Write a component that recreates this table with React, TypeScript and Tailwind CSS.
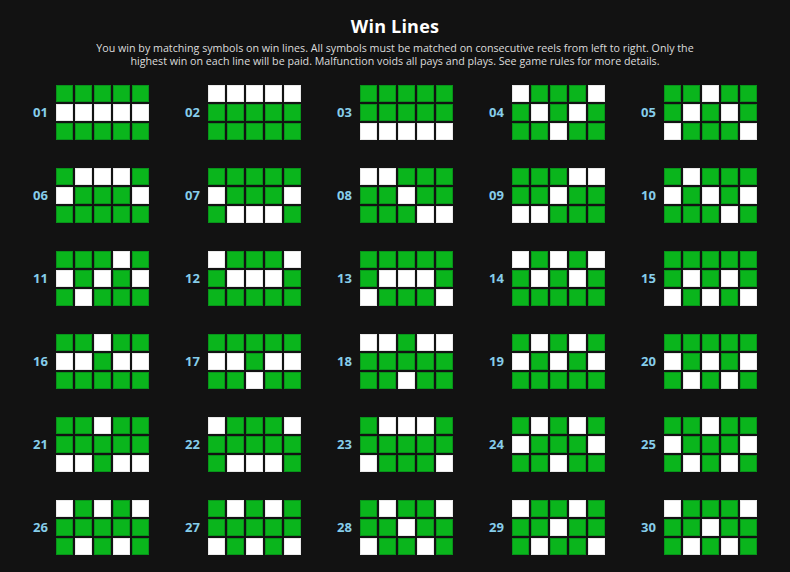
const lines: number[][] = [
  [1, 1, 1, 1, 1],
  [0, 0, 0, 0, 0],
  [2, 2, 2, 2, 2],
  [0, 1, 2, 1, 0],
  [2, 1, 0, 1, 2],
  [1, 0, 0, 0, 1],
  [1, 2, 2, 2, 1],
  [0, 0, 1, 2, 2],
  [2, 2, 1, 0, 0],
  [1, 0, 1, 2, 1],
  [1, 2, 1, 0, 1],
  [0, 1, 1, 1, 0],
  [2, 1, 1, 1, 2],
  [0, 1, 0, 1, 0],
  [2, 1, 2, 1, 2],
  [1, 1, 0, 1, 1],
  [1, 1, 2, 1, 1],
  [0, 0, 2, 0, 0],
  [1, 0, 1, 0, 1],
  [1, 2, 1, 2, 1],
  [2, 2, 0, 2, 2],
  [0, 2, 2, 2, 0],
  [2, 0, 0, 0, 2],
  [1, 0, 2, 0, 1],
  [1, 2, 0, 2, 1],
  [0, 2, 0, 2, 0],
  [2, 0, 2, 0, 2],
  [2, 0, 1, 2, 0],
  [0, 2, 1, 0, 2],
  [0, 2, 1, 2, 0],
];

function LineGrid({ pattern }: { pattern: number[] }) {
  // render row by row so the grid fills left to right
  const cells = [0, 1, 2].flatMap((row) =>
    pattern.map((r, col) => ({ key: `${row}-${col}`, on: r === row }))
  );
  return (
    <div className="grid grid-cols-[repeat(5,17px)] grid-rows-[repeat(3,17px)] gap-[2px]">
      {cells.map((c) => (
        <div
          key={c.key}
          className={c.on ? 'bg-white border border-[#e9e9e9]' : 'bg-[#0ab51c] border border-[#08931a]'}
        />
      ))}
    </div>
  );
}

export default function App() {
  return (
    <div
      className="w-[790px] h-[572px] bg-[#121212] text-white overflow-hidden"
      style={{ fontFamily: '"Open Sans", "Liberation Sans", sans-serif' }}
    >
      <div className="pt-[14px] text-center">
        <h1 className="text-[18px] leading-[24px] font-bold tracking-[0.2px]">Win Lines</h1>
        <p className="mt-[4px] text-[10.7px] leading-[13px] text-[#dcdcdc]">
          You win by matching symbols on win lines. All symbols must be matched on consecutive reels from left to right. Only the
          <br />
          highest win on each line will be paid. Malfunction voids all pays and plays. See game rules for more details.
        </p>
      </div>

      <div className="mt-[17px] flex flex-wrap justify-center gap-x-[36px] gap-y-[28px] px-[33px]">
        {lines.map((pattern, i) => (
          <div key={i} className="flex items-center w-[116px]">
            <span className="w-[23px] text-[13px] font-bold text-[#86cdea]">
              {String(i + 1).padStart(2, '0')}
            </span>
            <LineGrid pattern={pattern} />
          </div>
        ))}
      </div>
    </div>
  );
}
